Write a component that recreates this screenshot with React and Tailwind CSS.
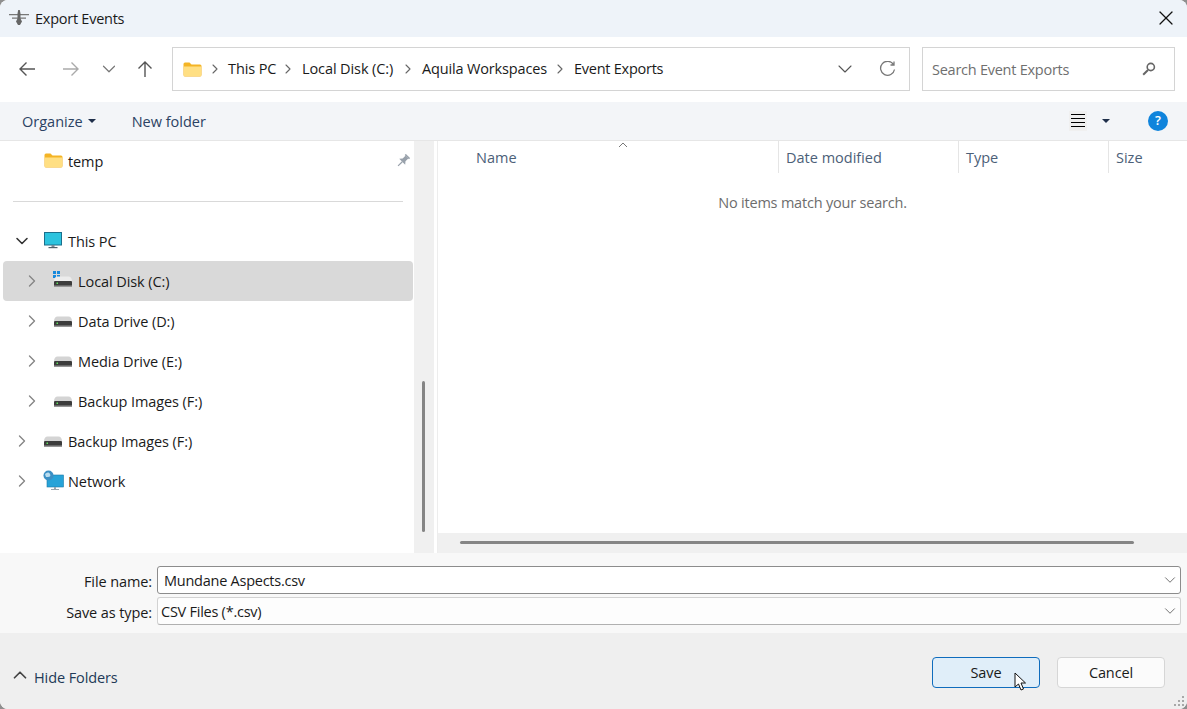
import { ChevronDown, ChevronRight, ChevronUp, X } from 'lucide-react';

function FolderIcon({ className }) {
  return (
    <svg className={className} width="19" height="15" viewBox="0 0 19 15">
      <path d="M0.5 2a1.5 1.5 0 0 1 1.5-1.5h4.5l2 2h8.5a1.5 1.5 0 0 1 1.5 1.5v9a1.5 1.5 0 0 1-1.5 1.5h-15a1.5 1.5 0 0 1-1.5-1.5z" fill="#f4b425" />
      <path d="M1 4.5h17v9a.6.6 0 0 1-.6.6H1.6a.6.6 0 0 1-.6-.6z" fill="#ffdf83" />
    </svg>
  );
}

function DriveIcon({ windows }) {
  return (
    <svg width="20" height="20" viewBox="0 0 20 20" className="shrink-0">
      {windows && (
        <g fill="#1689dc">
          <rect x="0" y="0" width="3" height="3" />
          <rect x="4" y="0" width="3" height="3" />
          <rect x="0" y="4" width="3" height="3" />
          <rect x="4" y="4" width="3" height="3" />
        </g>
      )}
      <path d="M1 10.5c0-3.5 1.5-5 3.5-5h11c2 0 3.5 1.5 3.5 5z" fill={windows ? '#ececec' : '#d4d4d4'} />
      <rect x="1" y="10" width="18" height="5.5" rx="1" fill="#3c3c3c" />
      <rect x="1" y="14.5" width="18" height="1.5" fill="#969696" />
      <rect x="3.5" y="11.5" width="1.5" height="1.5" fill="#5fe05f" />
    </svg>
  );
}

function MonitorIcon() {
  return (
    <svg width="19" height="17" viewBox="0 0 19 17" className="shrink-0">
      <rect x="1.5" y="0.5" width="17" height="12.5" fill="#2cc3de" stroke="#1b6f8c" />
      <rect x="8.5" y="13" width="3" height="2" fill="#7a8a95" />
      <rect x="5.5" y="15" width="9" height="1.2" fill="#51606b" />
    </svg>
  );
}

function NetworkIcon() {
  return (
    <svg width="21" height="21" viewBox="0 0 21 21" className="shrink-0">
      <rect x="4" y="5" width="16.5" height="12" fill="#27a3d8" stroke="#1b7ba8" strokeWidth="0.6" />
      <rect x="11" y="17" width="2" height="2" fill="#9aa5ad" />
      <rect x="8" y="19" width="8" height="1" fill="#9aa5ad" />
      <circle cx="5.5" cy="5.5" r="5" fill="#3b8fc4" />
      <path d="M2 4c2-2 4-2 5 0s0 3-2 3-2 1-3-3z" fill="#b9dcef" />
    </svg>
  );
}

function NavRow({ label, indent, icon, expanded, selected }) {
  let pad = 'pl-[12px]';
  if (indent) pad = selected ? 'pl-[19px]' : 'pl-[22px]';
  return (
    <div className={`flex h-10 items-center ${selected ? 'ml-[3px] w-[410px] rounded-sm bg-[#d9d9d9]' : ''}`}>
      <div className={`flex items-center ${pad}`}>
        <div className="flex w-5 justify-center">
          {expanded ? (
            <ChevronDown size={20} strokeWidth={1.9} className="shrink-0 text-[#333]" />
          ) : (
            <ChevronRight size={20} strokeWidth={1.6} className="shrink-0 text-[#858585]" />
          )}
        </div>
        <div className="ml-[11px] flex w-[25px] items-center">{icon}</div>
        <span className="pt-[2px] text-[14.5px] tracking-[-0.08px] text-[#1a1a1a]">{label}</span>
      </div>
    </div>
  );
}

export default function App() {
  const font = { fontFamily: '"Open Sans", "Noto Sans", sans-serif' };
  return (
    <div className="h-[709px] w-[1187px] bg-[#8f8f8f]" style={font}>
      <div className="relative flex h-[709px] flex-col overflow-hidden rounded-lg bg-white">
        {/* title bar */}
        <div className="flex h-[37px] items-center bg-[#eef3f9] pl-[9px] pr-[9px]">
          <svg width="20" height="16" viewBox="0 0 20 16">
            <path d="M0 4h20v1.2H0zM3 7.5h14v1.2H3z" fill="#777" />
            <path d="M9.2 0h1.6l.7 3.5v5l1.5 3-2 3.5H9l-2-3.5 1.5-3v-5z" fill="#666" />
          </svg>
          <span className="ml-[6px] text-[14.5px] tracking-[-0.25px] text-[#1a1a1a]">Export Events</span>
          <X size={24} strokeWidth={1.2} className="ml-auto text-[#111]" />
        </div>

        {/* nav row */}
        <div className="flex h-[65px] items-center bg-white pl-[18px] pr-3">
          <svg width="18" height="16" viewBox="0 0 18 16" fill="none" stroke="#555" strokeWidth="1.4">
            <path d="M17 8H2M8.5 1.5 2 8l6.5 6.5" />
          </svg>
          <svg className="ml-[26px]" width="18" height="16" viewBox="0 0 18 16" fill="none" stroke="#aaa" strokeWidth="1.4">
            <path d="M1 8h15M9.5 1.5 16 8l-6.5 6.5" />
          </svg>
          <ChevronDown size={22} strokeWidth={1.3} className="ml-[18px] text-[#777]" />
          <svg className="ml-[17px]" width="16" height="18" viewBox="0 0 16 18" fill="none" stroke="#555" strokeWidth="1.4">
            <path d="M8 17V2M1.5 8.5 8 2l6.5 6.5" />
          </svg>
          <div className="ml-[19px] flex h-[44px] w-[738px] items-center border border-[#d4d4d4] pl-[10px] text-[14.5px] tracking-[-0.1px] text-[#1a1a1a]">
            <FolderIcon />
            <ChevronRight size={16} strokeWidth={1.6} className="ml-[5px] text-[#666]" />
            <span className="ml-[5px] w-[52px] pb-[2px]">This PC</span>
            <ChevronRight size={16} strokeWidth={1.6} className="text-[#666]" />
            <span className="ml-[6px] w-[98px] pb-[2px]">Local Disk (C:)</span>
            <ChevronRight size={16} strokeWidth={1.6} className="text-[#666]" />
            <span className="ml-[6px] w-[130px] pb-[2px] tracking-[-0.15px]">Aquila Workspaces</span>
            <ChevronRight size={16} strokeWidth={1.6} className="text-[#666]" />
            <span className="ml-[6px] pb-[2px] tracking-[-0.25px]">Event Exports</span>
            <ChevronDown size={24} strokeWidth={1.1} className="ml-auto text-[#555]" />
            <svg className="ml-[22px] mr-[13px]" width="17" height="17" viewBox="0 0 17 17" fill="none" stroke="#777" strokeWidth="1.3">
              <path d="M14.5 3.5A7 7 0 1 0 15.5 8.5M15 0.5v3.5h-3.5" />
            </svg>
          </div>
          <div className="ml-3 flex h-[44px] w-[253px] items-center border border-[#d4d4d4] pl-[9px] pr-[18px] text-[14.5px] tracking-[-0.25px] text-[#6f6f6f]">
            <span>Search Event Exports</span>
            <svg className="ml-auto" width="14" height="14" viewBox="0 0 14 14" fill="none">
              <circle cx="8.8" cy="5" r="3.6" stroke="#666" strokeWidth="1.6" />
              <path d="M6 8 1.2 12.8" stroke="#666" strokeWidth="2" />
            </svg>
          </div>
        </div>

        {/* toolbar */}
        <div className="flex h-[39px] items-center border-b border-[#e6e6e6] bg-[#f3f5f8] pl-[22px] pr-[19px] text-[14.5px] text-[#2b4263]">
          <span className="pt-[2px]">Organize</span>
          <span className="ml-[5px] h-0 w-0 border-x-[4px] border-t-[4px] border-x-transparent border-t-[#1f2f4a]" />
          <span className="ml-[36px] pt-[2px]">New folder</span>
          <div className="ml-auto flex h-5 w-[18px] flex-col justify-center gap-[3px] bg-[#f0f0f0] px-[2px]">
            <div className="h-px bg-black" />
            <div className="h-px bg-black" />
            <div className="h-px bg-black" />
            <div className="h-px bg-black" />
          </div>
          <span className="ml-[15px] h-0 w-0 border-x-[4px] border-t-[4px] border-x-transparent border-t-[#1f2f4a]" />
          <div className="ml-[38px] flex h-5 w-5 items-center justify-center rounded-full bg-[#0f84dc] text-[13px] font-semibold text-white">?</div>
        </div>

        {/* main */}
        <div className="flex h-[413px]">
          <div className="w-[414px]">
            <div className="flex h-10 items-center pl-[44px]">
              <FolderIcon />
              <span className="ml-[5px] pt-[2px] text-[14.5px] tracking-[-0.1px] text-[#1a1a1a]">temp</span>
              <svg className="ml-auto mr-[4px]" width="14" height="14" viewBox="0 0 14 14" fill="#98a1ab">
                <g transform="rotate(45 7 7)">
                  <rect x="4" y="0" width="6" height="1.6" />
                  <path d="M5 1.5h4v4l2.2 2.6H2.8L5 5.5z" />
                  <rect x="6.4" y="8" width="1.2" height="6" />
                </g>
              </svg>
            </div>
            <div className="flex h-10 items-center pl-[13px] pr-[11px] pt-[2px]">
              <div className="h-px w-full bg-[#d9d9d9]" />
            </div>
            <NavRow label="This PC" icon={<MonitorIcon />} expanded />
            <NavRow label="Local Disk (C:)" indent selected icon={<DriveIcon windows />} />
            <NavRow label="Data Drive (D:)" indent icon={<DriveIcon />} />
            <NavRow label="Media Drive (E:)" indent icon={<DriveIcon />} />
            <NavRow label="Backup Images (F:)" indent icon={<DriveIcon />} />
            <NavRow label="Backup Images (F:)" icon={<DriveIcon />} />
            <NavRow label="Network" icon={<NetworkIcon />} />
          </div>

          {/* sidebar scrollbar */}
          <div className="w-5 bg-[#f0f0f0] pl-2 pt-[240px]">
            <div className="h-[151px] w-[3px] rounded-full bg-[#858585]" />
          </div>

          {/* file list */}
          <div className="ml-[3px] flex w-[750px] flex-col border-l border-[#ededed]">
            <div className="relative flex h-8 items-center text-[14.5px] text-[#4c6078]">
              <span className="absolute left-[180px] top-[1px] h-[6px] w-[10px]">
                <svg width="10" height="6" viewBox="0 0 10 6" fill="none" stroke="#777">
                  <path d="M1 5 5 1l4 4" />
                </svg>
              </span>
              <div className="flex h-full w-[341px] items-center border-r border-[#e5e5e5] pl-[38px] pt-[2px]">Name</div>
              <div className="flex h-full w-[180px] items-center border-r border-[#e5e5e5] pl-[7px] pt-[2px]">Date modified</div>
              <div className="flex h-full w-[150px] items-center border-r border-[#e5e5e5] pl-[7px] pt-[2px]">Type</div>
              <div className="flex h-full items-center pl-[7px] pt-[2px]">Size</div>
            </div>
            <div className="flex-1 pt-[19px] text-center text-[14.5px] tracking-[-0.2px] text-[#6d6d6d]">
              <span>No items match your search.</span>
            </div>
            <div className="h-5 bg-[#f0f0f0] pl-[22px] pt-2">
              <div className="h-[3px] w-[674px] rounded-full bg-[#858585]" />
            </div>
          </div>
        </div>

        {/* file name form */}
        <div className="flex h-[80px] flex-col gap-[3px] bg-[#f8f8f8] pl-[157px] pr-[6px] pt-[13px] text-[14.5px] tracking-[-0.25px] text-[#1a1a1a]">
          <div className="relative flex h-[28px] items-center rounded-[3px] border border-[#8c8c8c] bg-white pl-[6px] pr-px">
            <span className="absolute right-[calc(100%+6px)] top-[4px] whitespace-nowrap tracking-[-0.1px]">File name:</span>
            <span className="pt-[2px]">Mundane Aspects.csv</span>
            <ChevronDown size={18} strokeWidth={1.1} className="ml-auto text-[#555]" />
          </div>
          <div className="relative flex h-[28px] items-center rounded-[3px] border border-[#d2d2d2] border-b-[#b0b0b0] bg-[#fdfdfd] pl-[3px] pr-px">
            <span className="absolute right-[calc(100%+6px)] top-[4px] whitespace-nowrap tracking-[-0.1px]">Save as type:</span>
            <span className="pt-[2px]">CSV Files (*.csv)</span>
            <ChevronDown size={18} strokeWidth={1.1} className="ml-auto text-[#555]" />
          </div>
        </div>

        {/* footer */}
        <div className="flex h-[76px] items-center bg-[#efefef] pl-[9px] pr-[22px] text-[14.5px] tracking-[-0.1px] text-[#1a1a1a]">
          <ChevronUp size={22} strokeWidth={1.9} className="mt-[8px] text-[#444]" />
          <span className="ml-[3px] pt-[14px] text-[#223a57]">Hide Folders</span>
          <button type="button" className="ml-auto mt-[2px] h-[31px] w-[108px] rounded-[4px] border border-[#0f6cbd] bg-[#e0eef9] pt-[2px]">
            Save
          </button>
          <button type="button" className="ml-[17px] mt-[2px] h-[31px] w-[108px] rounded-[4px] border border-[#d6d6d6] bg-[#fbfbfb] pt-[2px]">
            Cancel
          </button>
        </div>

        {/* mouse pointer */}
        <svg className="absolute left-[1014px] top-[672px]" width="13" height="20" viewBox="0 0 13 20">
          <path d="M1 1v14l3.5-3 2.5 6 2.5-1-2.5-6h4.5z" fill="#fff" stroke="#111" strokeWidth="1" />
        </svg>

        {/* resize grip */}
        <svg className="absolute bottom-0 right-0" width="14" height="14" viewBox="0 0 14 14" fill="#a8a8a8">
          <rect x="9" y="1" width="2" height="2" />
          <rect x="5" y="5" width="2" height="2" />
          <rect x="9" y="5" width="2" height="2" />
          <rect x="1" y="9" width="2" height="2" />
          <rect x="5" y="9" width="2" height="2" />
          <rect x="9" y="9" width="2" height="2" />
        </svg>
      </div>
    </div>
  );
}
